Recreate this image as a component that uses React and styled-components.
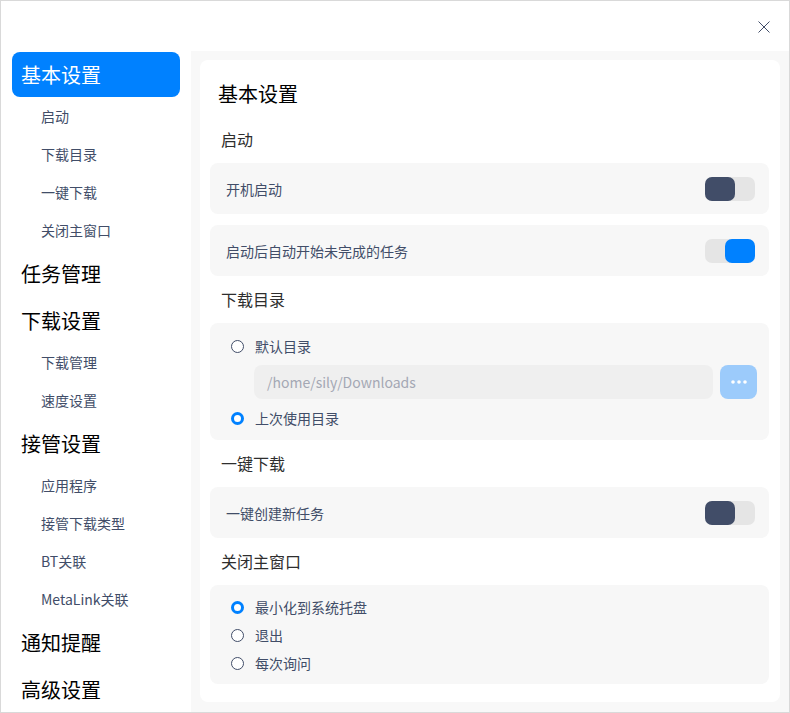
import styled, { createGlobalStyle } from 'styled-components';

const GlobalStyle = createGlobalStyle`
    html, body {
        margin:0;
        padding:0;
        background:#fff;
    }
    * { box-sizing:border-box; }
    body {
        font-family:"Noto Sans CJK SC", "Noto Sans", sans-serif;
        font-weight:400;
    }
`;

const navGroups = [
    { title: '基本设置', active: true, items: ['启动', '下载目录', '一键下载', '关闭主窗口'] },
    { title: '任务管理', items: [] },
    { title: '下载设置', items: ['下载管理', '速度设置'] },
    { title: '接管设置', items: ['应用程序', '接管下载类型', 'BT关联', 'MetaLink关联'] },
    { title: '通知提醒', items: [] },
    { title: '高级设置', items: [] },
];

const Switch = ({ on }) => (
    <SwitchTrack>
        <SwitchKnob $on={on} />
    </SwitchTrack>
);

const Radio = ({ checked, label }) => (
    <RadioRow>
        <RadioDot $checked={checked} />
        <span>{label}</span>
    </RadioRow>
);

const App = () => {
  return (
    <Window>
        <GlobalStyle />
        <TitleBar>
            <CloseButton>
                <svg width="12" height="12" viewBox="0 0 12 12">
                    <path d="M0.5 0.5 L11.5 11.5 M11.5 0.5 L0.5 11.5" stroke="#414d68" strokeWidth="1" fill="none" />
                </svg>
            </CloseButton>
        </TitleBar>
        <Body>
            <Sidebar>
                {navGroups.map(g => (
                    <div key={g.title}>
                        <NavHeader $active={g.active}>{g.title}</NavHeader>
                        {g.items.map(i => <NavItem key={i}>{i}</NavItem>)}
                    </div>
                ))}
            </Sidebar>
            <Content>
                <Card>
                    <CardTitle>基本设置</CardTitle>

                    <SectionTitle>启动</SectionTitle>
                    <Stack>
                        <Row>
                            <span>开机启动</span>
                            <Switch on={false} />
                        </Row>
                        <Row>
                            <span>启动后自动开始未完成的任务</span>
                            <Switch on={true} />
                        </Row>
                    </Stack>

                    <SectionTitle>下载目录</SectionTitle>
                    <RadioBox>
                        <Radio label="默认目录" />
                        <PathRow>
                            <PathInput>/home/sily/Downloads</PathInput>
                            <BrowseButton>
                                <svg width="16" height="4" viewBox="0 0 16 4">
                                    <circle cx="2" cy="2" r="1.8" fill="#fff" />
                                    <circle cx="8" cy="2" r="1.8" fill="#fff" />
                                    <circle cx="14" cy="2" r="1.8" fill="#fff" />
                                </svg>
                            </BrowseButton>
                        </PathRow>
                        <Radio checked label="上次使用目录" />
                    </RadioBox>

                    <SectionTitle>一键下载</SectionTitle>
                    <Row>
                        <span>一键创建新任务</span>
                        <Switch on={false} />
                    </Row>

                    <SectionTitle>关闭主窗口</SectionTitle>
                    <RadioList>
                        <Radio checked label="最小化到系统托盘" />
                        <Radio label="退出" />
                        <Radio label="每次询问" />
                    </RadioList>
                </Card>
            </Content>
        </Body>
    </Window>
  )
}

export default App

const Window = styled.div`
    width:790px;
    height:713px;
    border:1px solid #d9d9d9;
    display:flex;
    flex-direction:column;
    overflow:hidden;
    background:#fff;
`;
const TitleBar = styled.div`
    height:50px;
    flex-shrink:0;
    display:flex;
    justify-content:flex-end;
    align-items:center;
    padding-right:13px;
`;
const CloseButton = styled.div`
    width:24px;
    height:24px;
    display:grid;
    place-items:center;
    margin-top:1px;
`;
const Body = styled.div`
    flex:1;
    display:flex;
    min-height:0;
`;
const Sidebar = styled.div`
    width:190px;
    flex-shrink:0;
    padding:1px 11px 0 11px;
    background:#fff;
`;
const NavHeader = styled.div`
    height:45px;
    margin-bottom:2px;
    line-height:46px;
    padding-left:9px;
    border-radius:8px;
    font-size:20px;
    color:${props => props.$active ? '#fff' : '#000'};
    background:${props => props.$active ? '#0081ff' : 'transparent'};
`;
const NavItem = styled.div`
    height:38px;
    line-height:34px;
    padding-left:29px;
    font-size:14px;
    color:#414d68;
`;
const Content = styled.div`
    flex:1;
    background:#f8f8f8;
    padding:9px;
`;
const Card = styled.div`
    background:#fff;
    border-radius:8px;
    height:642px;
    padding:19px 11px 0 10px;
`;
const CardTitle = styled.div`
    height:30px;
    line-height:30px;
    margin-bottom:7px;
    padding-left:8px;
    font-size:20px;
    color:#000;
`;
const SectionTitle = styled.div`
    height:47px;
    line-height:47px;
    padding-left:11px;
    font-size:16px;
    color:#2e2e2e;
`;
const Stack = styled.div`
    display:flex;
    flex-direction:column;
    gap:11px;
`;
const Row = styled.div`
    height:51px;
    display:flex;
    align-items:center;
    justify-content:space-between;
    padding:0 14px 0 16px;
    background:#f7f7f7;
    border-radius:8px;
    font-size:14px;
    color:#414d68;
`;
const SwitchTrack = styled.div`
    width:50px;
    height:24px;
    border-radius:7px;
    background:#e5e5e5;
    display:flex;
`;
const SwitchKnob = styled.div`
    width:30px;
    height:24px;
    border-radius:7px;
    margin-left:${props => props.$on ? '20px' : '0'};
    background:${props => props.$on ? '#0081ff' : '#414d68'};
`;
const RadioBox = styled.div`
    background:#f7f7f7;
    border-radius:8px;
    padding:12px 12px 11px 21px;
    display:flex;
    flex-direction:column;
    gap:8px;
`;
const RadioList = styled.div`
    background:#f7f7f7;
    border-radius:8px;
    padding:8px 12px 7px 21px;
    display:flex;
    flex-direction:column;
`;
const RadioRow = styled.div`
    height:28px;
    display:flex;
    align-items:center;
    gap:11px;
    font-size:14px;
    color:#414d68;
    ${RadioBox} & {
        height:22px;
    }
`;
const RadioDot = styled.span`
    width:13px;
    height:13px;
    border-radius:50%;
    flex-shrink:0;
    border:${props => props.$checked ? '3px solid #0081ff' : '1px solid #414d68'};
    background:#fff;
`;
const PathRow = styled.div`
    display:flex;
    gap:7px;
    padding-left:23px;
`;
const PathInput = styled.div`
    flex:1;
    height:34px;
    line-height:34px;
    padding-left:13px;
    border-radius:8px;
    background:#efefef;
    font-size:14px;
    color:#a4a8b4;
`;
const BrowseButton = styled.div`
    width:37px;
    height:34px;
    border-radius:8px;
    background:#9ccbfb;
    display:grid;
    place-items:center;
`;
